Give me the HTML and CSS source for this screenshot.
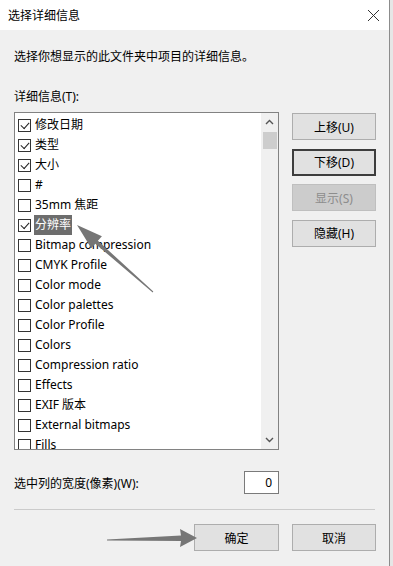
FILE: index.html
```html
<!DOCTYPE html>
<html lang="zh-CN">
<head>
    <meta charset="UTF-8">
    <meta name="viewport" content="width=device-width, initial-scale=1.0">
    <title>选择详细信息</title>
    <link rel="stylesheet" href="styles.css">
</head>
<body>
    <div class="dialog">
        <div class="titlebar">
            <span class="title">选择详细信息</span>
            <svg class="close" width="13" height="13" viewBox="0 0 13 13">
                <path d="M1 1L12 12M12 1L1 12" />
            </svg>
        </div>

        <div class="content">
            <p class="intro">选择你想显示的此文件夹中项目的详细信息。</p>
            <div class="list-label">详细信息(T):</div>

            <div class="picker">
                <div class="listbox">
                    <ul class="items">
                        <li><span class="box checked"></span><span class="name">修改日期</span></li>
                        <li><span class="box checked"></span><span class="name">类型</span></li>
                        <li><span class="box checked"></span><span class="name">大小</span></li>
                        <li><span class="box"></span><span class="name">#</span></li>
                        <li><span class="box"></span><span class="name">35mm 焦距</span></li>
                        <li><span class="box checked"></span><span class="name selected">分辨率</span></li>
                        <li><span class="box"></span><span class="name">Bitmap compression</span></li>
                        <li><span class="box"></span><span class="name">CMYK Profile</span></li>
                        <li><span class="box"></span><span class="name">Color mode</span></li>
                        <li><span class="box"></span><span class="name">Color palettes</span></li>
                        <li><span class="box"></span><span class="name">Color Profile</span></li>
                        <li><span class="box"></span><span class="name">Colors</span></li>
                        <li><span class="box"></span><span class="name">Compression ratio</span></li>
                        <li><span class="box"></span><span class="name">Effects</span></li>
                        <li><span class="box"></span><span class="name">EXIF 版本</span></li>
                        <li><span class="box"></span><span class="name">External bitmaps</span></li>
                        <li><span class="box"></span><span class="name">Fills</span></li>
                    </ul>
                    <div class="scrollbar">
                        <span class="scroll-arrow">
                            <svg width="9" height="6" viewBox="0 0 9 6"><path d="M1 5L4.5 1.5L8 5" /></svg>
                        </span>
                        <span class="thumb"></span>
                        <span class="track"></span>
                        <span class="scroll-arrow">
                            <svg width="9" height="6" viewBox="0 0 9 6"><path d="M1 1L4.5 4.5L8 1" /></svg>
                        </span>
                    </div>
                </div>

                <div class="side-buttons">
                    <button class="btn">上移(U)</button>
                    <button class="btn focused">下移(D)</button>
                    <button class="btn" disabled>显示(S)</button>
                    <button class="btn">隐藏(H)</button>
                </div>
            </div>

            <div class="width-row">
                <span>选中列的宽度(像素)(W):</span>
                <input class="width-input" type="text" value="0">
            </div>

            <hr class="separator">

            <div class="footer">
                <button class="btn ok">确定</button>
                <button class="btn">取消</button>
            </div>
        </div>

        <!-- annotation arrows drawn over the dialog -->
        <svg class="annotations" width="390" height="566" viewBox="0 0 390 566">
            <polygon points="77,225 101.9,236.2 97.9,240.7 153.3,291.6 152.7,292.4 95.3,243.7 91.3,248.2" />
            <polygon points="197,538 180,529 181,535.5 107,539.4 107,540.6 181,541 180,547" />
        </svg>
    </div>
</body>
</html>
```

FILE: styles.css
```css
body {
    margin: 0;
    background-color: #e6e6e6;
    font-family: "Noto Sans", "Noto Sans CJK SC", sans-serif;
    font-size: 12px;
    color: #000;
}
.dialog {
    position: relative;
    width: 389px;
    height: 566px;
    border-right: 1px solid #8c8c8c;
    background-color: #f0f0f0;
    overflow: hidden;
}
.titlebar {
    height: 30px;
    display: flex;
    align-items: center;
    justify-content: space-between;
    padding: 0 9px 0 8px;
    background-color: #fff;
}
.title {
    font-size: 12px;
}
.close path {
    stroke: #333;
    stroke-width: 1;
    fill: none;
}
.content {
    padding: 0 13px 0 14px;
}
.intro {
    margin: 19px 0 0;
    line-height: 16px;
}
.list-label {
    margin-top: 24px;
    line-height: 16px;
}
.picker {
    display: flex;
    gap: 13px;
    margin-top: 7px;
}
.listbox {
    display: flex;
    width: 263px;
    height: 336px;
    border: 1px solid #828282;
    background-color: #fff;
    overflow: hidden;
}
.items {
    flex: 1;
    list-style: none;
    margin: 0;
    padding: 2px 0 0;
}
.items li {
    display: flex;
    align-items: center;
    height: 20px;
    padding-left: 3px;
    white-space: nowrap;
}
.box {
    position: relative;
    width: 11px;
    height: 11px;
    border: 1px solid #333;
    background-color: #fff;
    margin-right: 4px;
    flex-shrink: 0;
}
.box.checked::after {
    content: "";
    position: absolute;
    left: 2px;
    top: 2px;
    width: 7px;
    height: 4px;
    border-left: 1px solid #222;
    border-bottom: 1px solid #222;
    transform: rotate(-48deg);
}
.name {
    line-height: 20px;
}
.name.selected {
    background-color: #6d6d6d;
    color: #fff;
    padding: 0 1px;
    margin-left: -1px;
}
.scrollbar {
    display: flex;
    flex-direction: column;
    width: 17px;
    background-color: #f0f0f0;
}
.scroll-arrow {
    display: flex;
    align-items: center;
    justify-content: center;
    height: 18px;
}
.scroll-arrow path {
    stroke: #555;
    stroke-width: 1.4;
    fill: none;
}
.thumb {
    height: 17px;
    margin: 1px 1px 0 2px;
    background-color: #cdcdcd;
}
.track {
    flex: 1;
}
.side-buttons {
    display: flex;
    flex-direction: column;
    gap: 8.5px;
    padding-top: 1px;
}
.btn {
    width: 84px;
    height: 27px;
    padding: 0;
    border: 1px solid #adadad;
    background-color: #e1e1e1;
    font-family: "Noto Sans", "Noto Sans CJK SC", sans-serif;
    font-size: 12px;
    color: #000;
}
.btn.focused {
    border: 2px solid #3d3d3d;
}
.btn:disabled {
    background-color: #cccccc;
    border-color: #bfbfbf;
    color: #8d8d8d;
}
.width-row {
    display: flex;
    align-items: center;
    justify-content: space-between;
    width: 265px;
    margin-top: 21px;
}
.width-input {
    box-sizing: border-box;
    width: 35px;
    height: 23px;
    border: 1px solid #7a7a7a;
    padding: 0 6px 0 0;
    text-align: right;
    font-family: "Noto Sans", sans-serif;
    font-size: 12px;
    background-color: #fff;
}
.separator {
    margin: 15px 1px 0 0;
    border: none;
    border-top: 1px solid #cbcbcb;
}
.footer {
    display: flex;
    justify-content: flex-end;
    gap: 13px;
    margin-top: 14px;
}
.btn.ok {
    width: 85px;
}
.annotations {
    position: absolute;
    left: 0;
    top: 0;
    pointer-events: none;
}
.annotations polygon {
    fill: #767676;
}
```
